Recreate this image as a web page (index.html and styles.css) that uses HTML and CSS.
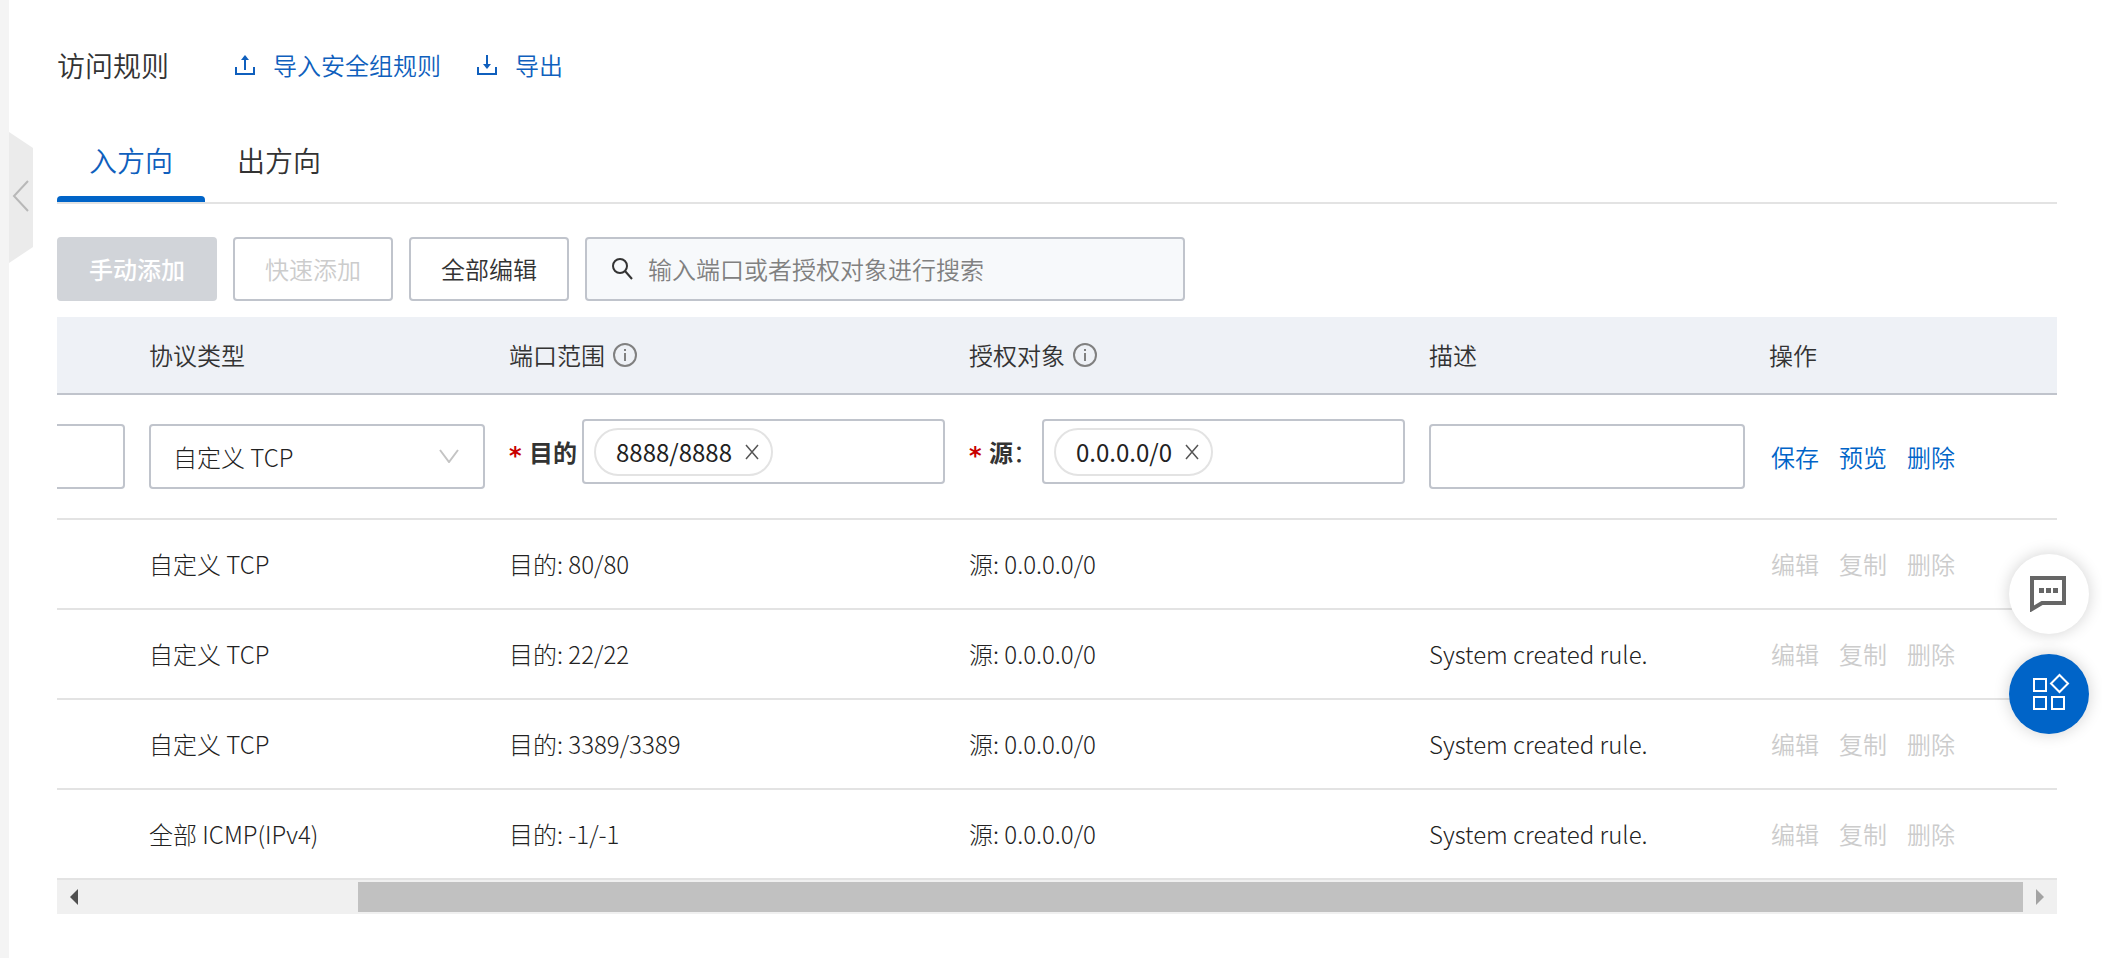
FILE: index.html
```html
<!DOCTYPE html>
<html lang="zh-CN">
<head>
<meta charset="utf-8">
<title>访问规则</title>
<meta name="viewport" content="width=device-width, initial-scale=1">
<link rel="stylesheet" href="styles.css">
</head>
<body>
<div class="layout">
  <aside class="rail">
    <button class="rail-toggle" type="button" aria-label="收起">
      <svg width="24" height="131" viewBox="0 0 24 131" aria-hidden="true">
        <path d="M0 0 24 16V115L0 131Z" fill="#ebebeb"/>
        <path d="M19 49 5 64 19 79" fill="none" stroke="#b8b8b8" stroke-width="2"/>
      </svg>
    </button>
  </aside>
  <main class="content">
    <header class="title-bar">
      <h1 class="title">访问规则</h1>
      <a class="title-link" href="#">
        <svg class="icon" width="20" height="20" viewBox="0 0 20 20" aria-hidden="true"><path d="M1 12V19H19V12M10 15V3" fill="none" stroke="currentColor" stroke-width="2"/><path d="M6 5 10 0 14 5Z" fill="currentColor"/></svg>
        <span>导入安全组规则</span>
      </a>
      <a class="title-link" href="#">
        <svg class="icon" width="20" height="20" viewBox="0 0 20 20" aria-hidden="true"><path d="M1 12V19H19V12M10 0V11" fill="none" stroke="currentColor" stroke-width="2"/><path d="M6 9 10 14 14 9Z" fill="currentColor"/></svg>
        <span>导出</span>
      </a>
    </header>

    <nav class="tabs" role="tablist">
      <button class="tab tab-active" type="button" role="tab" aria-selected="true">入方向</button>
      <button class="tab" type="button" role="tab" aria-selected="false">出方向</button>
    </nav>

    <div class="toolbar">
      <button class="btn btn-primary" type="button" disabled>手动添加</button>
      <button class="btn" type="button" disabled>快速添加</button>
      <button class="btn" type="button">全部编辑</button>
      <label class="search">
        <svg width="22" height="22" viewBox="0 0 22 22" aria-hidden="true"><circle cx="9" cy="8" r="7" fill="none" stroke="#333" stroke-width="2"/><path d="M14 13 21 21" stroke="#333" stroke-width="2"/></svg>
        <input class="search-input" type="text" placeholder="输入端口或者授权对象进行搜索" aria-label="搜索">
      </label>
    </div>

    <div class="table-wrap">
      <table class="rules">
        <colgroup>
          <col class="col-priority"><col class="col-protocol"><col class="col-port"><col class="col-source"><col class="col-desc"><col>
        </colgroup>
        <thead>
          <tr>
            <th></th>
            <th>协议类型</th>
            <th><span class="th-info">端口范围<svg width="24" height="24" viewBox="0 0 24 24" aria-hidden="true"><circle cx="12" cy="12" r="11" fill="none" stroke="#808080" stroke-width="2"/><path d="M12 10V18M12 6V8" stroke="#808080" stroke-width="2"/></svg></span></th>
            <th><span class="th-info">授权对象<svg width="24" height="24" viewBox="0 0 24 24" aria-hidden="true"><circle cx="12" cy="12" r="11" fill="none" stroke="#808080" stroke-width="2"/><path d="M12 10V18M12 6V8" stroke="#808080" stroke-width="2"/></svg></span></th>
            <th>描述</th>
            <th>操作</th>
          </tr>
        </thead>
        <tbody>
          <tr class="row-edit">
            <td class="cell-flush"><input class="box box-cut" type="text" aria-label="优先级"></td>
            <td>
              <div class="select">
                <select class="box select-box" aria-label="协议类型"><option>自定义 TCP</option></select>
                <svg class="select-arrow" width="20" height="14" viewBox="0 0 20 14" aria-hidden="true"><path d="M1 1 10 13 19 1" fill="none" stroke="#c4c4c4" stroke-width="2"/></svg>
              </div>
            </td>
            <td>
              <div class="field">
                <label class="field-label" for="port"><span class="required">*</span>目的</label>
                <div class="box tag-box">
                  <span class="tag">8888/8888<button class="tag-close" type="button" aria-label="移除"><svg width="14" height="16" viewBox="0 0 14 16" aria-hidden="true"><path d="M1 1 13 15M13 1 1 15" stroke="#555" stroke-width="1.5"/></svg></button></span>
                  <input class="tag-input" id="port" type="text">
                </div>
              </div>
            </td>
            <td>
              <div class="field">
                <label class="field-label" for="source"><span class="required">*</span><span>源<span class="colon">：</span></span></label>
                <div class="box tag-box">
                  <span class="tag">0.0.0.0/0<button class="tag-close" type="button" aria-label="移除"><svg width="14" height="16" viewBox="0 0 14 16" aria-hidden="true"><path d="M1 1 13 15M13 1 1 15" stroke="#555" stroke-width="1.5"/></svg></button></span>
                  <input class="tag-input" id="source" type="text">
                </div>
              </div>
            </td>
            <td><input class="box" type="text" aria-label="描述"></td>
            <td><div class="actions"><a class="action" href="#">保存</a><a class="action" href="#">预览</a><a class="action" href="#">删除</a></div></td>
          </tr>
          <tr>
            <td></td><td>自定义 TCP</td><td>目的: 80/80</td><td>源: 0.0.0.0/0</td><td></td>
            <td><div class="actions"><button class="action" type="button" disabled>编辑</button><button class="action" type="button" disabled>复制</button><button class="action" type="button" disabled>删除</button></div></td>
          </tr>
          <tr>
            <td></td><td>自定义 TCP</td><td>目的: 22/22</td><td>源: 0.0.0.0/0</td><td>System created rule.</td>
            <td><div class="actions"><button class="action" type="button" disabled>编辑</button><button class="action" type="button" disabled>复制</button><button class="action" type="button" disabled>删除</button></div></td>
          </tr>
          <tr>
            <td></td><td>自定义 TCP</td><td>目的: 3389/3389</td><td>源: 0.0.0.0/0</td><td>System created rule.</td>
            <td><div class="actions"><button class="action" type="button" disabled>编辑</button><button class="action" type="button" disabled>复制</button><button class="action" type="button" disabled>删除</button></div></td>
          </tr>
          <tr>
            <td></td><td>全部 ICMP(IPv4)</td><td>目的: -1/-1</td><td>源: 0.0.0.0/0</td><td>System created rule.</td>
            <td><div class="actions"><button class="action" type="button" disabled>编辑</button><button class="action" type="button" disabled>复制</button><button class="action" type="button" disabled>删除</button></div></td>
          </tr>
        </tbody>
      </table>
      <div class="scrollbar">
        <svg class="scroll-arrow" width="34" height="34" viewBox="0 0 34 34" aria-hidden="true"><path d="M21 9V25L13 17Z" fill="#505050"/></svg>
        <div class="scroll-track"><div class="scroll-thumb"></div></div>
        <svg class="scroll-arrow" width="34" height="34" viewBox="0 0 34 34" aria-hidden="true"><path d="M13 9V25L21 17Z" fill="#a3a3a3"/></svg>
      </div>
    </div>
  </main>
</div>

<div class="floats">
  <button class="float" type="button" aria-label="反馈">
    <svg width="38" height="36" viewBox="0 0 38 36" aria-hidden="true"><path d="M2 2H34V27H12L2 33Z" fill="none" stroke="#666" stroke-width="4"/><path d="M9 12h5v5H9zM16 12h5v5h-5zM23 12h5v5h-5z" fill="#666"/></svg>
  </button>
  <button class="float float-blue" type="button" aria-label="应用">
    <svg width="42" height="42" viewBox="-4 0 42 42" aria-hidden="true"><path d="M2 6H14V18H2ZM2 24H14V36H2ZM20 24H32V36H20ZM27.500 2 36 10.500 27.500 19 19 10.500Z" fill="none" stroke="#fff" stroke-width="2"/></svg>
  </button>
</div>
</body>
</html>
```

FILE: styles.css
```css
* {
  box-sizing: border-box;
}

body {
  margin: 0;
  background: #fff;
  color: #333;
  font: 24px/40px "Noto Sans CJK SC", sans-serif;
  font-weight: 350;
}

button,
input,
select {
  font: inherit;
  color: inherit;
}

button {
  margin: 0;
  padding: 0;
  border: 0;
  background: none;
}

a {
  color: #0f5fbd;
  text-decoration: none;
}

svg {
  display: block;
  flex: none;
}

.layout {
  display: flex;
  min-height: 100vh;
}

.rail {
  position: relative;
  flex: none;
  width: 9px;
  background: #f4f4f4;
}

.rail-toggle {
  position: absolute;
  top: 132px;
  left: 100%;
}

.content {
  flex: 1;
  min-width: 0;
  padding: 45px 45px 44px 48px;
}

.title-bar {
  display: flex;
  align-items: center;
  gap: 36px;
}

.title {
  margin: 0 30px 0 0;
  font-size: 28px;
  font-weight: inherit;
}

.title-link {
  display: flex;
  align-items: center;
  gap: 18px;
}

.tabs {
  display: flex;
  margin-top: 55px;
  border-bottom: 2px solid #e3e3e3;
}

.tab {
  padding: 0 32px 16px;
  border-bottom: 6px solid transparent;
  font-size: 28px;
  position: relative;
}

.tab-active {
  color: #0f5fbd;
}

.tab-active::after {
  content: "";
  position: absolute;
  right: 0;
  bottom: -6px;
  left: 0;
  height: 6px;
  border-radius: 4px 4px 0 0;
  background: #0064c8;
}

.toolbar {
  display: flex;
  gap: 16px;
  padding: 33px 0 16px;
}

.btn {
  height: 64px;
  padding: 0 30px;
  border: 2px solid #c0c4cc;
  border-radius: 4px;
}

.btn:disabled {
  color: #ccc;
}

.btn-primary:disabled {
  border-color: #d1d4d9;
  background: #d1d4d9;
  color: #fff;
  font-weight: 500;
}

.search {
  display: flex;
  align-items: center;
  gap: 15px;
  width: 600px;
  height: 64px;
  padding: 0 24px;
  border: 2px solid #c0c4cc;
  border-radius: 4px;
  background: #f7f9fb;
}

.search-input {
  flex: 1;
  min-width: 0;
  padding: 0;
  border: 0;
  background: none;
}

.search-input::placeholder {
  color: #808080;
  opacity: 1;
}

.rules {
  width: 100%;
  border-collapse: separate;
  border-spacing: 0;
  table-layout: fixed;
}

.col-priority {
  width: 68px;
}

.col-protocol {
  width: 360px;
}

.col-port,
.col-source {
  width: 460px;
}

.col-desc {
  width: 340px;
}

.rules th {
  height: 78px;
  padding: 0 0 0 24px;
  border-bottom: 2px solid #c0c4cc;
  background: #eef1f6;
  font-weight: inherit;
  text-align: left;
}

.rules td {
  height: 90px;
  padding: 0 0 0 24px;
  border-bottom: 2px solid #e3e3e3;
  color: #222;
  font-weight: 300;
}

.rules .row-edit td {
  height: 125px;
}

.rules .cell-flush {
  padding: 0;
}

.th-info {
  display: flex;
  align-items: center;
  gap: 8px;
}

.box {
  display: block;
  width: 100%;
  height: 65px;
  padding: 0 22px;
  border: 2px solid #c0c4cc;
  border-radius: 4px;
  background: #fff;
}

.box-cut {
  border-left: 0;
  border-radius: 0 4px 4px 0;
}

.select {
  position: relative;
}

.select-box {
  appearance: none;
}

.select-arrow {
  position: absolute;
  top: 25px;
  right: 26px;
  pointer-events: none;
}

.field {
  display: flex;
  align-items: center;
  padding-bottom: 10px;
}

.field-label {
  display: flex;
  flex: none;
  align-items: center;
  gap: 8px;
  width: 73px;
  color: #333;
  font-weight: 700;
  white-space: nowrap;
}

.required {
  width: 12px;
  padding-top: 8px;
  color: #c80000;
  font-family: "DejaVu Sans", sans-serif;
  line-height: 32px;
}

.colon {
  font-weight: 400;
}

.tag-box {
  display: flex;
  flex: 1;
  align-items: center;
  min-width: 0;
  padding: 0 10px;
}

.tag {
  display: flex;
  flex: none;
  align-items: center;
  gap: 13px;
  height: 48px;
  padding: 0 12px 0 20px;
  border: 2px solid #e3e3e3;
  border-radius: 24px;
  font-weight: 400;
}

.tag-input {
  flex: 1;
  min-width: 0;
  padding: 0;
  border: 0;
  background: none;
}

.actions {
  display: flex;
  gap: 20px;
  padding-left: 2px;
  font-weight: 350;
}

.action:disabled {
  color: #ccc;
}

a.action {
  color: #0064c8;
}

.scrollbar {
  display: flex;
  height: 34px;
  background: #f0f0f0;
}

.scroll-track {
  display: flex;
  flex: 1;
  justify-content: flex-end;
  padding: 2px 0;
}

.scroll-thumb {
  width: 86.2%;
  background: #c1c1c1;
}

.floats {
  position: fixed;
  top: 554px;
  right: 13px;
  display: grid;
  gap: 20px;
}

.float {
  display: grid;
  place-items: center;
  width: 80px;
  height: 80px;
  border-radius: 50%;
  background: #fff;
  box-shadow: 0 0 16px rgba(0, 0, 0, 0.18);
}

.float-blue {
  background: #0064c8;
}
```
